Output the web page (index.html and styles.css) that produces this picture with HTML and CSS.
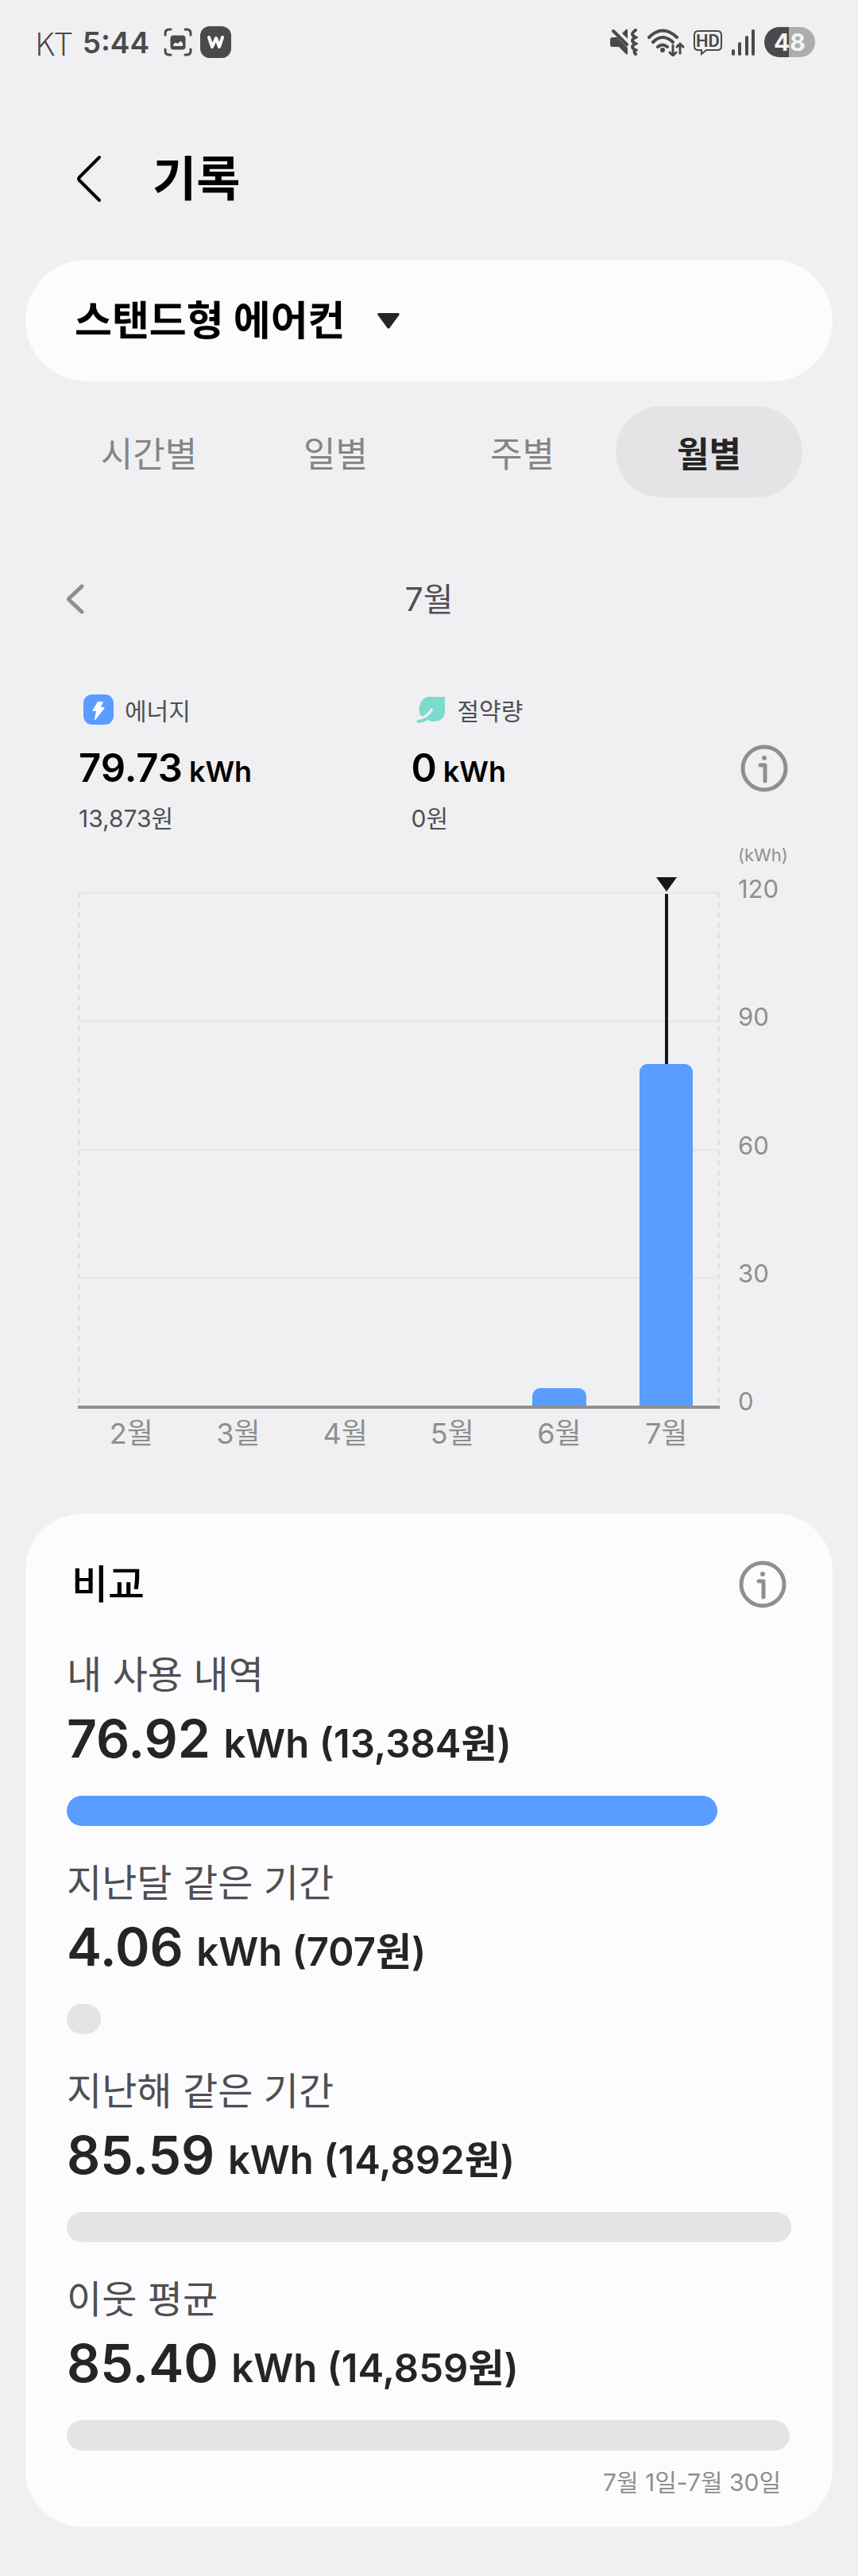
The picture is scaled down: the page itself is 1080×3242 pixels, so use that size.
FILE: index.html
```html
<!DOCTYPE html>
<html lang="ko">
<head>
    <meta charset="UTF-8">
    <meta name="viewport" content="width=device-width, initial-scale=1.0">
    <title>기록</title>
    <link rel="stylesheet" href="styles.css">
</head>
<body>

    <!-- Status bar -->
    <div class="status-bar">
        <div class="status-left">
            <span class="carrier">KT</span>
            <span class="clock">5:44</span>
            <svg class="icon-capture" width="36" height="36" viewBox="0 0 36 36" fill="none" stroke="#4a4a4a" stroke-width="3" stroke-linecap="round">
                <path d="M2 9V7q0-5 5-5h2M27 2h2q5 0 5 5v2M34 27v2q0 5-5 5h-2M9 34H7q-5 0-5-5v-2"/>
                <rect x="8.500" y="9.500" width="19" height="18" rx="4" fill="#4a4a4a" stroke="none"/>
                <path d="M12 23q1-5 4-4l2 1q4-6 6 0v3z" fill="#f0f0f2" stroke="none"/>
            </svg>
            <svg width="39" height="40" viewBox="0 0 39 40">
                <rect width="39" height="40" rx="12" fill="#4a4a4a"/>
                <path d="M11 14l4 12 5-11 4 11 4-12" fill="none" stroke="#fff" stroke-width="4" stroke-linecap="round" stroke-linejoin="round"/>
            </svg>
        </div>
        <div class="status-right">
            <svg width="36" height="34" viewBox="0 0 36 34">
                <path d="M4 11h6L23 24v8q-1 1-2 0l-9-9H4q-3 0-3-3v-6q0-3 3-3zM16 6l5-5q2-1 2 1v11z" fill="#4a4a4a"/>
                <path d="M9 2l15 14" stroke="#f0f0f2" stroke-width="3"/>
                <path d="M5 3l17 17" stroke="#4a4a4a" stroke-width="4" stroke-linecap="round"/>
                <path d="M33 2q-4 3-4 5t4 4q-4 2-4 4t4 4q-4 2-4 4t4 4q-3 2 0 5" fill="none" stroke="#4a4a4a" stroke-width="4" stroke-linecap="round"/>
            </svg>
            <svg width="48" height="36" viewBox="0 0 48 36" fill="none" stroke="#4a4a4a" stroke-width="4" stroke-linecap="round">
                <path d="M3 12q17-17 35 0M8 18q12-12 25 0M14 24q6-5 12 0"/>
                <circle cx="20" cy="28" r="3" fill="#4a4a4a" stroke="none"/>
                <path d="M33 22v12M29 31l4 4 4-4M42 32V20M38 24l4-4 4 4" stroke-width="3"/>
            </svg>
            <svg width="36" height="34" viewBox="0 0 36 34">
                <path d="M6 3h24q5 0 5 5v14q0 5-5 5H16l-6 5V27H6q-5 0-5-5V8q0-5 5-5z" fill="none" stroke="#4a4a4a" stroke-width="2"/>
                <text class="hd-text" x="18" y="23" text-anchor="middle">HD</text>
            </svg>
            <svg width="31" height="34" viewBox="0 0 31 34" stroke="#4a4a4a" stroke-width="4" stroke-linecap="round">
                <path d="M3 28v4M11 19v13M20 11v21M28 3v29"/>
            </svg>
            <span class="battery">48</span>
        </div>
    </div>

    <!-- Page title -->
    <header class="page-header">
        <button class="icon-button" aria-label="뒤로">
            <svg width="32" height="60" viewBox="0 0 32 60" fill="none" stroke="#000" stroke-width="4" stroke-linecap="round" stroke-linejoin="round">
                <path d="M29 3L4 28q-2 2 0 4l25 25"/>
            </svg>
        </button>
        <h1 class="page-title">기록</h1>
    </header>

    <!-- Device picker -->
    <div class="device-picker">
        <select class="device-select" aria-label="기기">
            <option>스탠드형 에어컨</option>
        </select>
        <svg width="28" height="20" viewBox="0 0 28 20">
            <path d="M2 0h24q3 0 1 3L16 18q-2 3-4 0L1 3q-2-3 1-3z" fill="#252527"/>
        </svg>
    </div>

    <!-- Period tabs -->
    <nav class="tabs">
        <button class="tab">시간별</button>
        <button class="tab">일별</button>
        <button class="tab">주별</button>
        <button class="tab tab-active">월별</button>
    </nav>

    <div class="month-nav">
        <button class="icon-button" aria-label="이전 달">
            <svg width="24" height="38" viewBox="0 0 24 38" fill="none" stroke="#8f8f8f" stroke-width="5" stroke-linecap="round" stroke-linejoin="round">
                <path d="M20 3L4 18q-1 1 0 2l16 15"/>
            </svg>
        </button>
        <h2 class="month-title">7월</h2>
    </div>

    <!-- Summary -->
    <section class="summary">
        <div class="summary-item">
            <div class="summary-label">
                <svg width="38" height="38" viewBox="0 0 38 38">
                    <rect width="38" height="38" rx="11" fill="#5a9cff"/>
                    <path d="M18 9h7l-3 7h4q1 1 0 2L15 32q-1 1-1-1l2-10h-3q-2 0-1-2z" fill="#fff"/>
                </svg>
                에너지
            </div>
            <div class="summary-value">79.73<span class="unit">kWh</span></div>
            <div class="summary-cost">13,873원</div>
        </div>
        <div class="summary-item">
            <div class="summary-label">
                <svg width="38" height="38" viewBox="0 0 38 38">
                    <path d="M16 3h20v17q0 14-15 14-4 0-7-2-4 3-12 4-3-2 0-4 13-1 19-13-1-3-3-1-3 6-11 10-5-6-3-13Q7 3 16 3z" fill="#7bdccb"/>
                </svg>
                절약량
            </div>
            <div class="summary-value">0<span class="unit">kWh</span></div>
            <div class="summary-cost">0원</div>
        </div>
        <button class="icon-button summary-info" aria-label="정보">
            <svg width="60" height="60" viewBox="0 0 60 60" fill="none" stroke="#8f8f8f" stroke-linecap="round" stroke-linejoin="round">
                <circle cx="30" cy="30" r="27" stroke-width="5"/>
                <circle cx="30" cy="17" r="3" fill="#8f8f8f" stroke="none"/>
                <path d="M25 26h6v20" stroke-width="5"/>
            </svg>
        </button>
    </section>

    <!-- Monthly chart -->
    <section class="chart">
        <div class="chart-main">
            <div class="plot">
                <div class="grid-lines">
                    <div class="grid-line"></div>
                    <div class="grid-line"></div>
                    <div class="grid-line"></div>
                    <div class="grid-line"></div>
                </div>
                <div class="columns">
                    <div class="column"></div>
                    <div class="column"></div>
                    <div class="column"></div>
                    <div class="column"></div>
                    <div class="column"><div class="bar" style="height: 3.4%"></div></div>
                    <div class="column column-selected">
                        <div class="marker"></div>
                        <div class="bar" style="height: 66.4%"></div>
                    </div>
                </div>
            </div>
            <div class="month-labels">
                <span>2월</span>
                <span>3월</span>
                <span>4월</span>
                <span>5월</span>
                <span>6월</span>
                <span>7월</span>
            </div>
        </div>
        <div class="axis">
            <div class="axis-unit">(kWh)</div>
            <div class="axis-labels">
                <span>120</span>
                <span>90</span>
                <span>60</span>
                <span>30</span>
                <span>0</span>
            </div>
        </div>
    </section>

    <!-- Comparison -->
    <section class="compare-card">
        <div class="compare-header">
            <h2 class="compare-title">비교</h2>
            <button class="icon-button" aria-label="정보">
                <svg width="60" height="60" viewBox="0 0 60 60" fill="none" stroke="#8f8f8f" stroke-linecap="round" stroke-linejoin="round">
                    <circle cx="30" cy="30" r="27" stroke-width="5"/>
                    <circle cx="30" cy="17" r="3" fill="#8f8f8f" stroke="none"/>
                    <path d="M25 26h6v20" stroke-width="5"/>
                </svg>
            </button>
        </div>
        <div class="compare-list">
            <div class="compare-item">
                <div class="compare-label">내 사용 내역</div>
                <div class="compare-value">76.92 <span class="compare-detail">kWh (13,384원)</span></div>
                <div class="compare-bar compare-bar-mine" style="width: 89.8%"></div>
            </div>
            <div class="compare-item">
                <div class="compare-label">지난달 같은 기간</div>
                <div class="compare-value">4.06 <span class="compare-detail">kWh (707원)</span></div>
                <div class="compare-bar" style="width: 4.7%"></div>
            </div>
            <div class="compare-item">
                <div class="compare-label">지난해 같은 기간</div>
                <div class="compare-value">85.59 <span class="compare-detail">kWh (14,892원)</span></div>
                <div class="compare-bar" style="width: 100%"></div>
            </div>
            <div class="compare-item">
                <div class="compare-label">이웃 평균</div>
                <div class="compare-value">85.40 <span class="compare-detail">kWh (14,859원)</span></div>
                <div class="compare-bar" style="width: 99.8%"></div>
            </div>
        </div>
        <p class="compare-period">7월 1일-7월 30일</p>
    </section>

</body>
</html>
```
FILE: styles.css
```css
/* Basic styling */
* {
    box-sizing: border-box;
}

body {
    margin: 0;
    background-color: #f0f0f2;
    color: #252527;
    font-family: Inter, "Noto Sans CJK KR", sans-serif;
}

h1, h2, p {
    margin: 0;
}

svg {
    display: block;
    flex: none;
}

button, select {
    border: none;
    padding: 0;
    background: none;
    font-family: inherit;
    cursor: pointer;
}

/* Status bar */
.status-bar {
    display: flex;
    justify-content: space-between;
    align-items: center;
    height: 106px;
    padding: 0 54px 0 44px;
    color: #4a4a4a;
}

.status-left, .status-right {
    display: flex;
    align-items: center;
}

.status-right {
    gap: 11px;
}

.carrier {
    font-family: "Noto Sans CJK KR", sans-serif;
    font-size: 40px;
    font-weight: 300;
    line-height: 48px;
}

.clock {
    margin: 0 18px 0 12px;
    font-size: 37px;
    font-weight: 600;
}

.icon-capture {
    margin-right: 10px;
}

.hd-text {
    font-family: Roboto, sans-serif;
    font-size: 22px;
    font-weight: 600;
    fill: #4a4a4a;
}

.battery {
    width: 64px;
    border-radius: 19px;
    background: linear-gradient(to right, #4a4a4a 48%, #adadad 48%);
    color: #f4f4f4;
    font-size: 30px;
    font-weight: 700;
    line-height: 38px;
    text-align: center;
}

/* Page title */
.page-header {
    display: flex;
    align-items: center;
    gap: 64px;
    padding: 83px 96px 66px;
}

.page-title {
    font-size: 60px;
    font-weight: 700;
    line-height: 72px;
    color: #000;
}

/* Device picker */
.device-picker {
    display: flex;
    align-items: center;
    gap: 40px;
    height: 153px;
    margin: 0 32px;
    padding: 0 62px;
    border-radius: 77px;
    background-color: #fcfcfe;
}

.device-select {
    appearance: none;
    font-size: 51px;
    font-weight: 700;
    line-height: 76px;
    color: #000;
}

/* Tabs */
.tabs {
    display: grid;
    grid-template-columns: repeat(4, 1fr);
    padding: 31px 70px 0;
}

.tab {
    height: 115px;
    border-radius: 58px;
    font-size: 44px;
    color: #858585;
}

.tab-active {
    background-color: #e4e4e6;
    font-weight: 700;
    color: #252527;
}

/* Month navigation */
.month-nav {
    display: grid;
    grid-template-columns: 1fr auto 1fr;
    align-items: center;
    padding: 100px 83px 92px;
}

.month-title {
    font-size: 41px;
    font-weight: 400;
    line-height: 56px;
    color: #4f4f53;
}

/* Summary */
.summary {
    display: grid;
    grid-template-columns: 1fr 1fr 56px;
    padding: 0 88px 0 99px;
}

.summary-label {
    display: flex;
    align-items: center;
    gap: 14px;
    height: 38px;
    padding-left: 6px;
    font-size: 30px;
    color: #4f4f53;
}

.summary-value {
    margin: 23px 0 11px;
    font-size: 49px;
    font-weight: 600;
    line-height: 64px;
    color: #000;
}

.unit {
    margin-left: 8px;
    font-size: 36px;
    line-height: 1;
}

.summary-cost {
    font-size: 30px;
    line-height: 40px;
    color: #4f4f53;
}

.summary-info {
    justify-self: end;
    padding-top: 10px;
}

/* Chart */
.chart {
    display: flex;
    gap: 23px;
    padding: 11px 70px 0 98px;
    color: #8f8f8f;
}

.chart-main {
    flex: 1;
    padding-top: 61px;
}

.plot {
    display: grid;
    height: 651px;
    border-bottom: 4px solid #8f8f93;
    background:
        repeating-linear-gradient(#e1e1e3 0 7px, transparent 7px 13px) left / 3px 100% no-repeat,
        repeating-linear-gradient(#e1e1e3 0 7px, transparent 7px 13px) right / 3px 100% no-repeat;
}

.grid-lines, .columns {
    grid-area: 1 / 1;
}

.grid-lines {
    display: flex;
    flex-direction: column;
}

.grid-line {
    flex: 1;
    border-top: 3px solid #e8e8ea;
}

.columns, .month-labels {
    display: grid;
    grid-template-columns: repeat(6, 1fr);
}

.column {
    display: flex;
    flex-direction: column;
    justify-content: flex-end;
    align-items: center;
    position: relative;
}

.bar {
    width: 50%;
    border-radius: 10px 10px 0 0;
    background-color: #5a9cff;
}

.marker {
    flex: 1;
    width: 4px;
    margin-top: 3px;
    background-color: #161616;
}

/* Pointer above the selected month */
.column-selected::before {
    content: "";
    position: absolute;
    top: -18px;
    border: 13px solid transparent;
    border-top: 18px solid #161616;
    border-bottom: none;
}

.month-labels {
    padding-top: 6px;
    font-size: 36px;
    line-height: 50px;
    text-align: center;
}

.axis {
    width: 81px;
}

.axis-unit {
    font-size: 22px;
    line-height: 30px;
}

.axis-labels {
    display: flex;
    flex-direction: column;
    justify-content: space-between;
    height: 685px;
    margin-top: 8px;
    font-size: 31px;
    line-height: 40px;
}

/* Comparison card */
.compare-card {
    margin: 76px 32px 63px;
    padding: 59px 52px 34px;
    border-radius: 72px;
    background-color: #fcfcfe;
}

.compare-header {
    display: flex;
    justify-content: space-between;
    align-items: center;
    padding: 0 6px;
}

.compare-title {
    font-size: 50px;
    font-weight: 500;
    line-height: 60px;
    color: #000;
}

.compare-list {
    display: flex;
    flex-direction: column;
    gap: 42px;
    margin-top: 54px;
}

.compare-label {
    font-size: 48px;
    line-height: 60px;
    color: #4f4f53;
}

.compare-value {
    margin: 10px 0 32px;
    font-size: 66px;
    font-weight: 600;
    line-height: 80px;
}

.compare-detail {
    font-size: 49px;
    line-height: 1;
}

.compare-bar {
    height: 38px;
    border-radius: 19px;
    background-color: #e4e4e6;
}

.compare-bar-mine {
    background-color: #5a9cff;
}

.compare-period {
    margin-top: 18px;
    padding-right: 13px;
    font-size: 30px;
    line-height: 44px;
    text-align: right;
    color: #8f8f8f;
}
```
